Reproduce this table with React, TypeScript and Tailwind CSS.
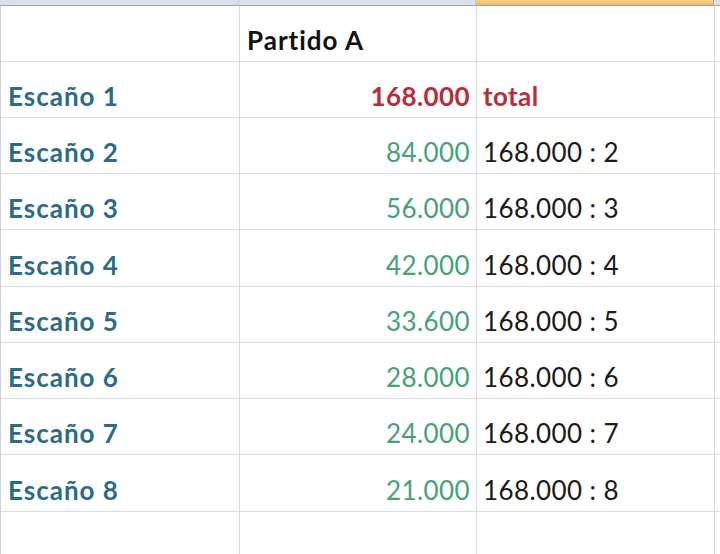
import React from 'react';

const seats = [
  { label: 'Escaño 1', value: '168.000', note: 'total', first: true },
  { label: 'Escaño 2', value: '84.000', note: '168.000 : 2' },
  { label: 'Escaño 3', value: '56.000', note: '168.000 : 3' },
  { label: 'Escaño 4', value: '42.000', note: '168.000 : 4' },
  { label: 'Escaño 5', value: '33.600', note: '168.000 : 5' },
  { label: 'Escaño 6', value: '28.000', note: '168.000 : 6' },
  { label: 'Escaño 7', value: '24.000', note: '168.000 : 7' },
  { label: 'Escaño 8', value: '21.000', note: '168.000 : 8' },
];

const rowHeights = ['h-[56px]', 'h-[56px]', 'h-[56px]', 'h-[57px]', 'h-[56px]', 'h-[56px]', 'h-[56px]', 'h-[57px]'];

const cell = 'border-r border-b border-[#d5dae3] flex items-end pb-[8px] overflow-hidden whitespace-nowrap';

export default function App() {
  return (
    <div className="w-[720px] h-[554px] overflow-hidden bg-white text-[26px] leading-none" style={{ fontFamily: 'Lato, "Open Sans", sans-serif' }}>
      {/* column header strip */}
      <div className="grid grid-cols-[239px_237px_238px_1fr] h-[6px] border-b border-[#9ba5b1]">
        <div className="bg-[#d9e1eb] border-r border-[#c3cbd6]" />
        <div className="bg-[#d9e1eb] border-r border-[#c3cbd6]" />
        <div className="bg-gradient-to-b from-[#f9d38f] to-[#f1b654] border-r border-[#d9a65a]" />
        <div className="bg-[#d9e1eb]" />
      </div>

      <div className="grid grid-cols-[239px_237px_238px_1fr] border-l border-[#c9d3e0]">
        {/* title row */}
        <div className={`${cell} h-[56px]`} />
        <div className={`${cell} h-[56px] pl-[7px] font-bold tracking-[1px] text-[#111111]`}>Partido A</div>
        <div className={`${cell} h-[56px]`} />
        <div className={`${cell} h-[56px] border-r-0`} />

        {seats.map((s, i) => (
          <React.Fragment key={s.label}>
            <div className={`${cell} ${rowHeights[i]} pl-[7px] font-bold tracking-[1px] text-[#2d6a84]`}>{s.label}</div>
            <div
              className={`${cell} ${rowHeights[i]} justify-end pr-[6px] tracking-[0.4px] ${
                s.first ? 'font-bold text-[#b52f3b]' : 'text-[#47a077]'
              }`}
            >
              {s.value}
            </div>
            <div
              className={`${cell} ${rowHeights[i]} pl-[6px] tracking-[0.4px] ${
                s.first ? 'font-bold text-[#b52f3b]' : 'text-[#1a1a1a]'
              }`}
            >
              {s.note}
            </div>
            <div className={`${cell} ${rowHeights[i]} border-r-0`} />
          </React.Fragment>
        ))}

        {/* trailing empty row */}
        <div className={`${cell} h-[56px]`} />
        <div className={`${cell} h-[56px]`} />
        <div className={`${cell} h-[56px]`} />
        <div className={`${cell} h-[56px] border-r-0`} />
      </div>
    </div>
  );
}
